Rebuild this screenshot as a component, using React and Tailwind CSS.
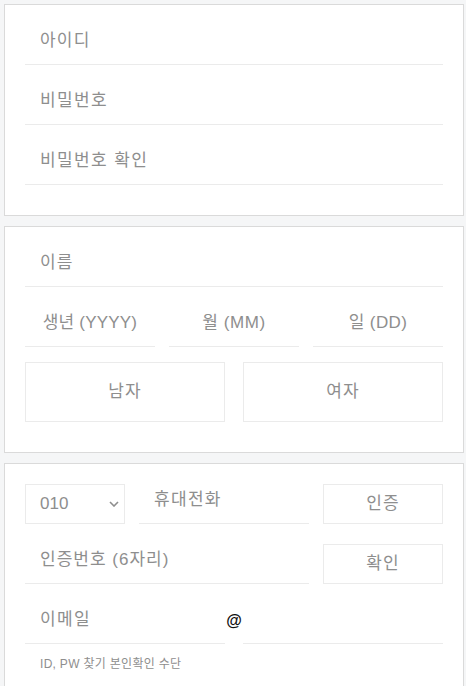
import React from "react";

const font = { fontFamily: '"Liberation Sans", "Noto Sans CJK KR", sans-serif' };

function Field({ placeholder, className = "", center = false }) {
  return (
    <input
      type="text"
      placeholder={placeholder}
      className={`h-10 border-b border-[#ebebeb] bg-transparent pb-[7px] text-[17px] text-[#333] outline-none placeholder:text-[#8e8e8e] ${center ? "px-0 text-center" : "pl-[15px]"} ${className}`}
    />
  );
}

function Btn({ children, className = "" }) {
  return (
    <button
      className={`border border-[#ebebeb] bg-white text-[17px] tracking-[1.2px] text-[#8e8e8e] ${className}`}
    >
      {children}
    </button>
  );
}

export default function App() {
  return (
    <div
      className="min-h-screen w-[466px] bg-[#f5f6f7] pt-1 pl-1 pr-[2px] flex flex-col gap-[10px]"
      style={font}
    >
      {/* Card 1 */}
      <div className="bg-white border border-[#dadada] px-5 pt-5 pb-[30px] flex flex-col gap-5">
        <Field placeholder="아이디" className="w-full tracking-[1.2px]" />
        <Field placeholder="비밀번호" className="w-full tracking-[1.4px]" />
        <Field placeholder="비밀번호 확인" className="w-full tracking-[1.4px]" />
      </div>

      {/* Card 2 */}
      <div className="bg-white border border-[#dadada] px-5 pt-5 pb-[30px] flex flex-col">
        <Field placeholder="이름" className="w-full tracking-[1.2px]" />
        <div className="mt-5 grid grid-cols-3 gap-[14px]">
          <Field placeholder="생년 (YYYY)" center className="w-full min-w-0 tracking-[0.2px]" />
          <Field placeholder="월 (MM)" center className="w-full min-w-0 tracking-[0.6px]" />
          <Field placeholder="일 (DD)" center className="w-full min-w-0 tracking-[0.4px]" />
        </div>
        <div className="mt-[15px] grid grid-cols-2 gap-[18px]">
          <Btn className="h-[60px]">남자</Btn>
          <Btn className="h-[60px]">여자</Btn>
        </div>
      </div>

      {/* Card 3 */}
      <div className="bg-white border border-[#dadada] px-5 pt-5 pb-5 flex flex-col">
        <div className="flex gap-[14px] h-10">
          <div className="w-[100px] h-10 border border-[#ebebeb] flex items-center justify-between pl-[14px] pr-[5px] text-[17px] text-[#8e8e8e]">
            <span>010</span>
            <svg width="10" height="6" viewBox="0 0 10 6" fill="none">
              <path d="M1 1L5 5L9 1" stroke="#8e8e8e" strokeWidth="1.6" />
            </svg>
          </div>
          <Field placeholder="휴대전화" className="w-[170px] tracking-[1.3px]" />
          <Btn className="w-[120px] h-10">인증</Btn>
        </div>
        <div className="mt-5 flex gap-[14px] h-10">
          <Field placeholder="인증번호 (6자리)" className="flex-1 min-w-0 tracking-[1px]" />
          <Btn className="w-[120px] h-10">확인</Btn>
        </div>
        <div className="mt-5 flex h-10">
          <Field placeholder="이메일" className="w-[200px] tracking-[1.3px]" />
          <div className="w-[18px] h-10 flex items-center justify-center pb-[7px] text-[16px] font-bold text-[#111]">
            @
          </div>
          <Field placeholder="" className="w-[200px]" />
        </div>
        <p className="mt-[11px] pl-[15px] text-[12px] leading-[18px] tracking-[0.3px] text-[#8e8e8e]">
          ID, PW 찾기 본인확인 수단
        </p>
      </div>
    </div>
  );
}
